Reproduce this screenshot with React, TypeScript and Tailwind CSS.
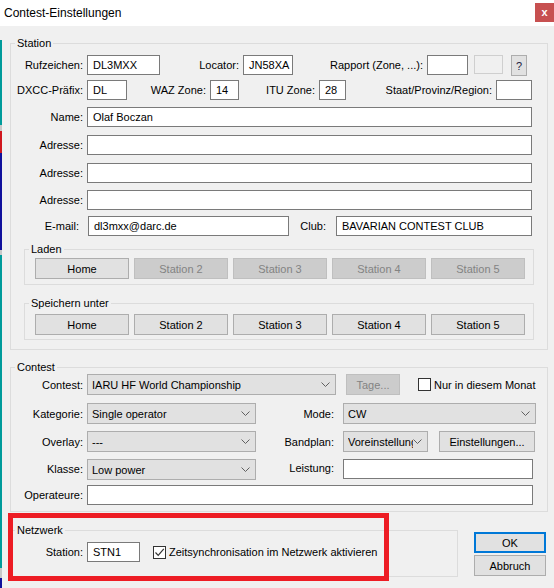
import React from "react";

const Lbl = ({ cls, children }: { cls: string; children?: React.ReactNode }) => (
  <div className={"shrink-0 text-right whitespace-nowrap leading-[16px] " + cls}>{children}</div>
);

const Inp = ({ cls, children }: { cls: string; children?: React.ReactNode }) => (
  <div
    className={
      "shrink-0 h-[20px] border border-[#7a7a7a] bg-white flex items-center pl-[5px] overflow-hidden whitespace-nowrap leading-[16px] " +
      cls
    }
  >
    {children}
  </div>
);

const Chevron = () => (
  <svg width="9" height="5" viewBox="0 0 9 5" className="shrink-0">
    <path d="M0.5 0.5 L4.5 4.5 L8.5 0.5" fill="none" stroke="#606060" strokeWidth="1" />
  </svg>
);

const Combo = ({ cls, children }: { cls: string; children?: React.ReactNode }) => (
  <div
    className={
      "shrink-0 h-[21px] border border-[#adadad] bg-[#e1e1e1] flex items-center pl-[4px] pr-[5px] leading-[16px] " +
      cls
    }
  >
    <span className="flex-1 overflow-hidden whitespace-nowrap">{children}</span>
    <Chevron />
  </div>
);

const Btn = ({ cls, children }: { cls: string; children?: React.ReactNode }) => (
  <div
    className={
      "shrink-0 h-[21px] border border-[#adadad] bg-[#e1e1e1] flex items-center justify-center whitespace-nowrap leading-[16px] " +
      cls
    }
  >
    {children}
  </div>
);

const DisBtn = ({ cls, children }: { cls: string; children?: React.ReactNode }) => (
  <div
    className={
      "shrink-0 h-[21px] border border-[#bfbfbf] bg-[#cccccc] text-[#838383] flex items-center justify-center whitespace-nowrap leading-[16px] " +
      cls
    }
  >
    {children}
  </div>
);

const Legend = ({ children }: { children: React.ReactNode }) => (
  <legend className="ml-[4px] px-[2px] leading-[14px]">{children}</legend>
);

export default function App() {
  const stations = ["Home", "Station 2", "Station 3", "Station 4", "Station 5"];
  return (
    <div className="relative w-[554px] h-[588px] overflow-hidden bg-[#f0f0f0] text-black text-[11px] font-['Liberation_Sans',Arial,sans-serif] flex flex-col">
      {/* title bar */}
      <div className="h-[26px] shrink-0 bg-white flex items-start justify-between">
        <div className="pl-[4px] pt-[5px] leading-[16px] text-[12px]">Contest-Einstellungen</div>
        <div className="mt-[3px] w-[19px] h-[19px] bg-[#c75050] text-white flex items-center justify-center text-[11px] font-bold leading-none">
          x
        </div>
      </div>

      <div className="flex flex-row flex-1">
        {/* background window strip */}
        <div className="w-[2px] shrink-0 flex flex-col">
          <div className="h-[14px] bg-[#f0f0f0]" />
          <div className="h-[85px] bg-[#009b9b]" />
          <div className="h-[6px] bg-[#c8c8c8]" />
          <div className="h-[22px] bg-[#d0161e]" />
          <div className="h-[97px] bg-[#10109c]" />
          <div className="h-[5px] bg-[#c8c8c8]" />
          <div className="h-[313px] bg-[#009b9b]" />
          <div className="h-[10px] bg-[#c8c8c8]" />
          <div className="h-[10px] bg-[#10109c]" />
        </div>

        <div className="flex-1 flex flex-col">
          {/* Station */}
          <fieldset className="mt-[10px] ml-[8px] mr-[6px] border border-[#dcdcdc] pb-[9px]">
            <Legend>Station</Legend>
            <div className="flex flex-col">
              <div className="mt-[5px] h-[20px] flex items-start">
                <Lbl cls="w-[72px] pt-[2px]">Rufzeichen:</Lbl>
                <Inp cls="ml-[4px] w-[73px]">DL3MXX</Inp>
                <Lbl cls="w-[79px] pt-[2px]">Locator:</Lbl>
                <Inp cls="ml-[4px] w-[50px]">JN58XA</Inp>
                <Lbl cls="w-[130px] pt-[2px]">Rapport (Zone, ...):</Lbl>
                <Inp cls="ml-[4px] w-[41px]"></Inp>
                <div className="shrink-0 ml-[6px] w-[29px] h-[19px] border border-[#cfcfcf] bg-[#f0f0f0]" />
                <Btn cls="ml-[8px] w-[16px] text-[#1a1a40]">?</Btn>
              </div>
              <div className="mt-[5px] h-[20px] flex items-start">
                <Lbl cls="w-[72px] pt-[2px]">DXCC-Präfix:</Lbl>
                <Inp cls="ml-[4px] w-[40px]">DL</Inp>
                <Lbl cls="w-[79px] pt-[2px]">WAZ Zone:</Lbl>
                <Inp cls="ml-[4px] w-[29px]">14</Inp>
                <Lbl cls="w-[76px] pt-[2px]">ITU Zone:</Lbl>
                <Inp cls="ml-[4px] w-[27px]">28</Inp>
                <Lbl cls="w-[146px] pt-[2px]">Staat/Provinz/Region:</Lbl>
                <Inp cls="ml-[4px] w-[36px]"></Inp>
              </div>
              <div className="mt-[7px] h-[20px] flex items-start">
                <Lbl cls="w-[72px] pt-[2px]">Name:</Lbl>
                <Inp cls="ml-[4px] w-[445px]">Olaf Boczan</Inp>
              </div>
              <div className="mt-[8px] h-[20px] flex items-start">
                <Lbl cls="w-[72px] pt-[2px]">Adresse:</Lbl>
                <Inp cls="ml-[4px] w-[445px]"></Inp>
              </div>
              <div className="mt-[8px] h-[20px] flex items-start">
                <Lbl cls="w-[72px] pt-[2px]">Adresse:</Lbl>
                <Inp cls="ml-[4px] w-[445px]"></Inp>
              </div>
              <div className="mt-[7px] h-[20px] flex items-start">
                <Lbl cls="w-[72px] pt-[2px]">Adresse:</Lbl>
                <Inp cls="ml-[4px] w-[445px]"></Inp>
              </div>
              <div className="mt-[6px] h-[20px] flex items-start">
                <Lbl cls="w-[68px] pt-[2px]">E-mail:</Lbl>
                <Inp cls="ml-[9px] w-[201px]">dl3mxx@darc.de</Inp>
                <Lbl cls="w-[37px] pt-[2px]">Club:</Lbl>
                <Inp cls="ml-[10px] w-[196px]">BAVARIAN CONTEST CLUB</Inp>
              </div>

              <fieldset className="mt-[6px] mx-[13px] border border-[#dcdcdc] pb-[5px]">
                <Legend>Laden</Legend>
                <div className="mt-[2px] pl-[10px] flex gap-[5px]">
                  <Btn cls="w-[94px] h-[20px]">Home</Btn>
                  {stations.slice(1).map((s) => (
                    <DisBtn key={s} cls="w-[94px] h-[20px]">
                      {s}
                    </DisBtn>
                  ))}
                </div>
              </fieldset>

              <fieldset className="mt-[11px] mx-[13px] border border-[#dcdcdc] pb-[4px]">
                <Legend>Speichern unter</Legend>
                <div className="mt-[4px] pl-[10px] flex gap-[5px]">
                  {stations.map((s) => (
                    <Btn key={s} cls="w-[94px] h-[20px]">
                      {s}
                    </Btn>
                  ))}
                </div>
              </fieldset>
            </div>
          </fieldset>

          {/* Contest */}
          <fieldset className="mt-[10px] ml-[8px] mr-[6px] border border-[#dcdcdc] pb-[6px]">
            <Legend>Contest</Legend>
            <div className="flex flex-col">
              <div className="h-[21px] flex items-center">
                <Lbl cls="w-[72px]">Contest:</Lbl>
                <Combo cls="ml-[4px] w-[249px]">IARU HF World Championship</Combo>
                <DisBtn cls="ml-[10px] w-[54px]">Tage...</DisBtn>
                <div className="ml-[18px] w-[13px] h-[13px] shrink-0 border border-[#333333] bg-white" />
                <div className="ml-[3px] whitespace-nowrap leading-[16px]">Nur in diesem Monat</div>
              </div>
              <div className="mt-[8px] h-[21px] flex items-center">
                <Lbl cls="w-[72px]">Kategorie:</Lbl>
                <Combo cls="ml-[4px] w-[169px]">Single operator</Combo>
                <Lbl cls="w-[78px]">Mode:</Lbl>
                <Combo cls="ml-[9px] w-[193px]">CW</Combo>
              </div>
              <div className="mt-[7px] h-[21px] flex items-center">
                <Lbl cls="w-[72px]">Overlay:</Lbl>
                <Combo cls="ml-[4px] w-[169px]">---</Combo>
                <Lbl cls="w-[78px]">Bandplan:</Lbl>
                <Combo cls="ml-[9px] w-[85px]">Voreinstellung</Combo>
                <Btn cls="ml-[11px] w-[96px]">Einstellungen...</Btn>
              </div>
              <div className="mt-[7px] h-[21px] flex items-start">
                <Lbl cls="w-[72px] pt-[2px]">Klasse:</Lbl>
                <Combo cls="ml-[4px] w-[169px]">Low power</Combo>
                <Lbl cls="w-[78px] pt-[1px]">Leistung:</Lbl>
                <Inp cls="ml-[9px] w-[190px]"></Inp>
              </div>
              <div className="mt-[5px] h-[20px] flex items-start">
                <Lbl cls="w-[72px] pt-[2px]">Operateure:</Lbl>
                <Inp cls="ml-[4px] w-[446px]"></Inp>
              </div>
            </div>
          </fieldset>

          {/* Netzwerk + buttons */}
          <div className="flex items-start">
            <fieldset className="mt-[11px] ml-[8px] w-[448px] shrink-0 border border-[#dcdcdc] pb-[14px]">
              <Legend>Netzwerk</Legend>
              <div className="mt-[5px] h-[20px] flex items-center">
                <Lbl cls="w-[72px]">Station:</Lbl>
                <Inp cls="ml-[4px] w-[53px]">STN1</Inp>
                <div className="ml-[13px] w-[13px] h-[13px] shrink-0 border border-[#333333] bg-white flex items-center justify-center">
                  <svg width="11" height="11" viewBox="0 0 11 11">
                    <path d="M1.5 5.5 L4.2 8.3 L9.8 1.8" fill="none" stroke="#333333" strokeWidth="1.2" />
                  </svg>
                </div>
                <div className="ml-[3px] whitespace-nowrap leading-[16px]">Zeitsynchronisation im Netzwerk aktivieren</div>
              </div>
            </fieldset>
            <div className="ml-[16px] flex flex-col">
              <div className="mt-[20px] w-[72px] h-[21px] border-2 border-[#0078d7] bg-[#e1e1e1] flex items-center justify-center leading-[16px]">
                OK
              </div>
              <Btn cls="mt-[2px] w-[72px]">Abbruch</Btn>
            </div>
          </div>
        </div>
      </div>

      {/* red highlight annotation */}
      <div className="absolute left-[8px] top-[513px] w-[381px] h-[68px] border-[5px] border-[#ed1c24] pointer-events-none" />
    </div>
  );
}
